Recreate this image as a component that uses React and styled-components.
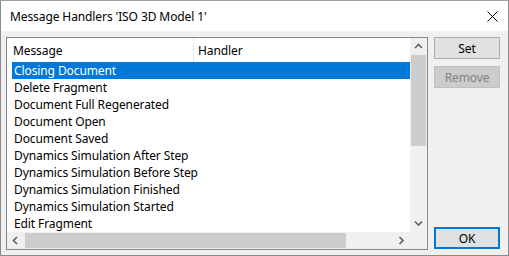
import React from "react";
import styled, {createGlobalStyle} from "styled-components";

const GlobalStyle = createGlobalStyle`
  *, *::before, *::after {
    box-sizing: border-box;
  }
  html, body {
    margin: 0;
    padding: 0;
    background: #f0f0f0;
  }
  body {
    font-family: "Noto Sans", "Open Sans", sans-serif;
    font-size: 12px;
    letter-spacing: -0.1px;
  }
`;

const messages = [
    "Closing Document",
    "Delete Fragment",
    "Document Full Regenerated",
    "Document Open",
    "Document Saved",
    "Dynamics Simulation After Step",
    "Dynamics Simulation Before Step",
    "Dynamics Simulation Finished",
    "Dynamics Simulation Started",
    "Edit Fragment"
];

const Chevron = ({dir}) => {
    const paths = {
        up: "M1 5 L4.5 1.5 L8 5",
        down: "M1 1.5 L4.5 5 L8 1.5",
        left: "M5 1 L1.5 4.5 L5 8",
        right: "M1.5 1 L5 4.5 L1.5 8"
    };
    const vertical = dir === "up" || dir === "down";
    return <svg width={vertical ? 9 : 7} height={vertical ? 7 : 9} viewBox={vertical ? "0 0 9 7" : "0 0 7 9"}>
        <path d={paths[dir]} fill="none" stroke="#606060" strokeWidth="1.6"/>
    </svg>;
};

const App = () => {
    return <>
        <GlobalStyle/>
        <Window>
            <TitleBar>
                <Title>Message Handlers 'ISO 3D Model 1'</Title>
                <CloseIcon>
                    <svg width="11" height="11" viewBox="0 0 11 11">
                        <path d="M0.5 0.5 L10.5 10.5 M10.5 0.5 L0.5 10.5" stroke="#000" strokeWidth="1"/>
                    </svg>
                </CloseIcon>
            </TitleBar>
            <Body>
                <ListBox>
                    <ListMain>
                        <ListContent>
                            <Header>
                                <HeaderCell $width={187}>Message</HeaderCell>
                                <HeaderCell>Handler</HeaderCell>
                            </Header>
                            <Rows>
                                {messages.map((m, i) => <Row key={m} $selected={i === 0}>{m}</Row>)}
                            </Rows>
                        </ListContent>
                        <VScroll>
                            <ArrowCell><Chevron dir="up"/></ArrowCell>
                            <VTrack>
                                <VThumb/>
                            </VTrack>
                            <ArrowCell><Chevron dir="down"/></ArrowCell>
                        </VScroll>
                    </ListMain>
                    <HScrollRow>
                        <HScroll>
                            <ArrowCell><Chevron dir="left"/></ArrowCell>
                            <HTrack>
                                <HThumb/>
                            </HTrack>
                            <ArrowCell><Chevron dir="right"/></ArrowCell>
                        </HScroll>
                        <Corner/>
                    </HScrollRow>
                </ListBox>
                <ButtonColumn>
                    <Button>Set</Button>
                    <Button disabled>Remove</Button>
                    <Button $default>OK</Button>
                </ButtonColumn>
            </Body>
        </Window>
    </>;
};

const Window = styled.div`
  width: 509px;
  height: 256px;
  border: 1px solid #8a8a8a;
  border-top-color: #a0a0a0;
  background: #f0f0f0;
  display: flex;
  flex-direction: column;
`;

const TitleBar = styled.div`
  height: 30px;
  flex-shrink: 0;
  background: #ffffff;
  display: flex;
  align-items: center;
  justify-content: space-between;
  padding: 0 10px 0 9px;
`;

const Title = styled.div`
  color: #000;
  font-size: 12px;
  padding-top: 1px;
`;

const CloseIcon = styled.div`
  width: 11px;
  height: 11px;
  display: flex;
`;

const Body = styled.div`
  flex: 1;
  display: flex;
  padding: 6px 7px 5px 5px;
  gap: 6px;
`;

const ListBox = styled.div`
  width: 422px;
  height: 213px;
  border: 1px solid #828790;
  background: #ffffff;
  display: flex;
  flex-direction: column;
`;

const ListMain = styled.div`
  flex: 1;
  display: flex;
  min-height: 0;
`;

const ListContent = styled.div`
  flex: 1;
  display: flex;
  flex-direction: column;
  overflow: hidden;
`;

const Header = styled.div`
  height: 24px;
  display: flex;
  align-items: stretch;
  flex-shrink: 0;
`;

const HeaderCell = styled.div`
  ${({$width}) => $width ? `width: ${$width}px; border-right: 1px solid #e5e5e5;` : "flex: 1;"}
  display: flex;
  align-items: center;
  padding-left: ${({$width}) => $width ? 6 : 4}px;
  color: #000;
`;

const Rows = styled.div`
  display: flex;
  flex-direction: column;
  padding-left: 5px;
`;

const Row = styled.div`
  height: 17px;
  line-height: 17px;
  padding-left: 2px;
  white-space: nowrap;
  color: ${({$selected}) => $selected ? "#ffffff" : "#000000"};
  background: ${({$selected}) => $selected ? "#0078d7" : "transparent"};
`;

const VScroll = styled.div`
  width: 17px;
  background: #f0f0f0;
  display: flex;
  flex-direction: column;
`;

const ArrowCell = styled.div`
  width: 17px;
  height: 17px;
  flex-shrink: 0;
  display: flex;
  align-items: center;
  justify-content: center;
`;

const VTrack = styled.div`
  flex: 1;
  display: flex;
  flex-direction: column;
  align-items: center;
`;

const VThumb = styled.div`
  width: 15px;
  height: 91px;
  background: #cdcdcd;
`;

const HScrollRow = styled.div`
  height: 17px;
  display: flex;
  flex-shrink: 0;
`;

const HScroll = styled.div`
  flex: 1;
  display: flex;
  background: #f0f0f0;
`;

const HTrack = styled.div`
  flex: 1;
  display: flex;
  align-items: center;
  padding-left: 1px;
`;

const HThumb = styled.div`
  width: 321px;
  height: 15px;
  background: #cdcdcd;
`;

const Corner = styled.div`
  width: 17px;
  background: #f0f0f0;
`;

const ButtonColumn = styled.div`
  width: 66px;
  display: flex;
  flex-direction: column;
  gap: 7px;
`;

const Button = styled.button`
  width: 66px;
  height: 22px;
  font-family: inherit;
  font-size: 12px;
  letter-spacing: inherit;
  padding: 0;
  border: ${({$default}) => $default ? "2px solid #0078d7" : "1px solid #adadad"};
  background: #e1e1e1;
  color: #000;
  margin-top: ${({$default}) => $default ? "auto" : "0"};
  margin-bottom: ${({$default}) => $default ? "1px" : "0"};

  &:disabled {
    background: #cccccc;
    border-color: #bfbfbf;
    color: #838383;
  }
`;

export default App;
